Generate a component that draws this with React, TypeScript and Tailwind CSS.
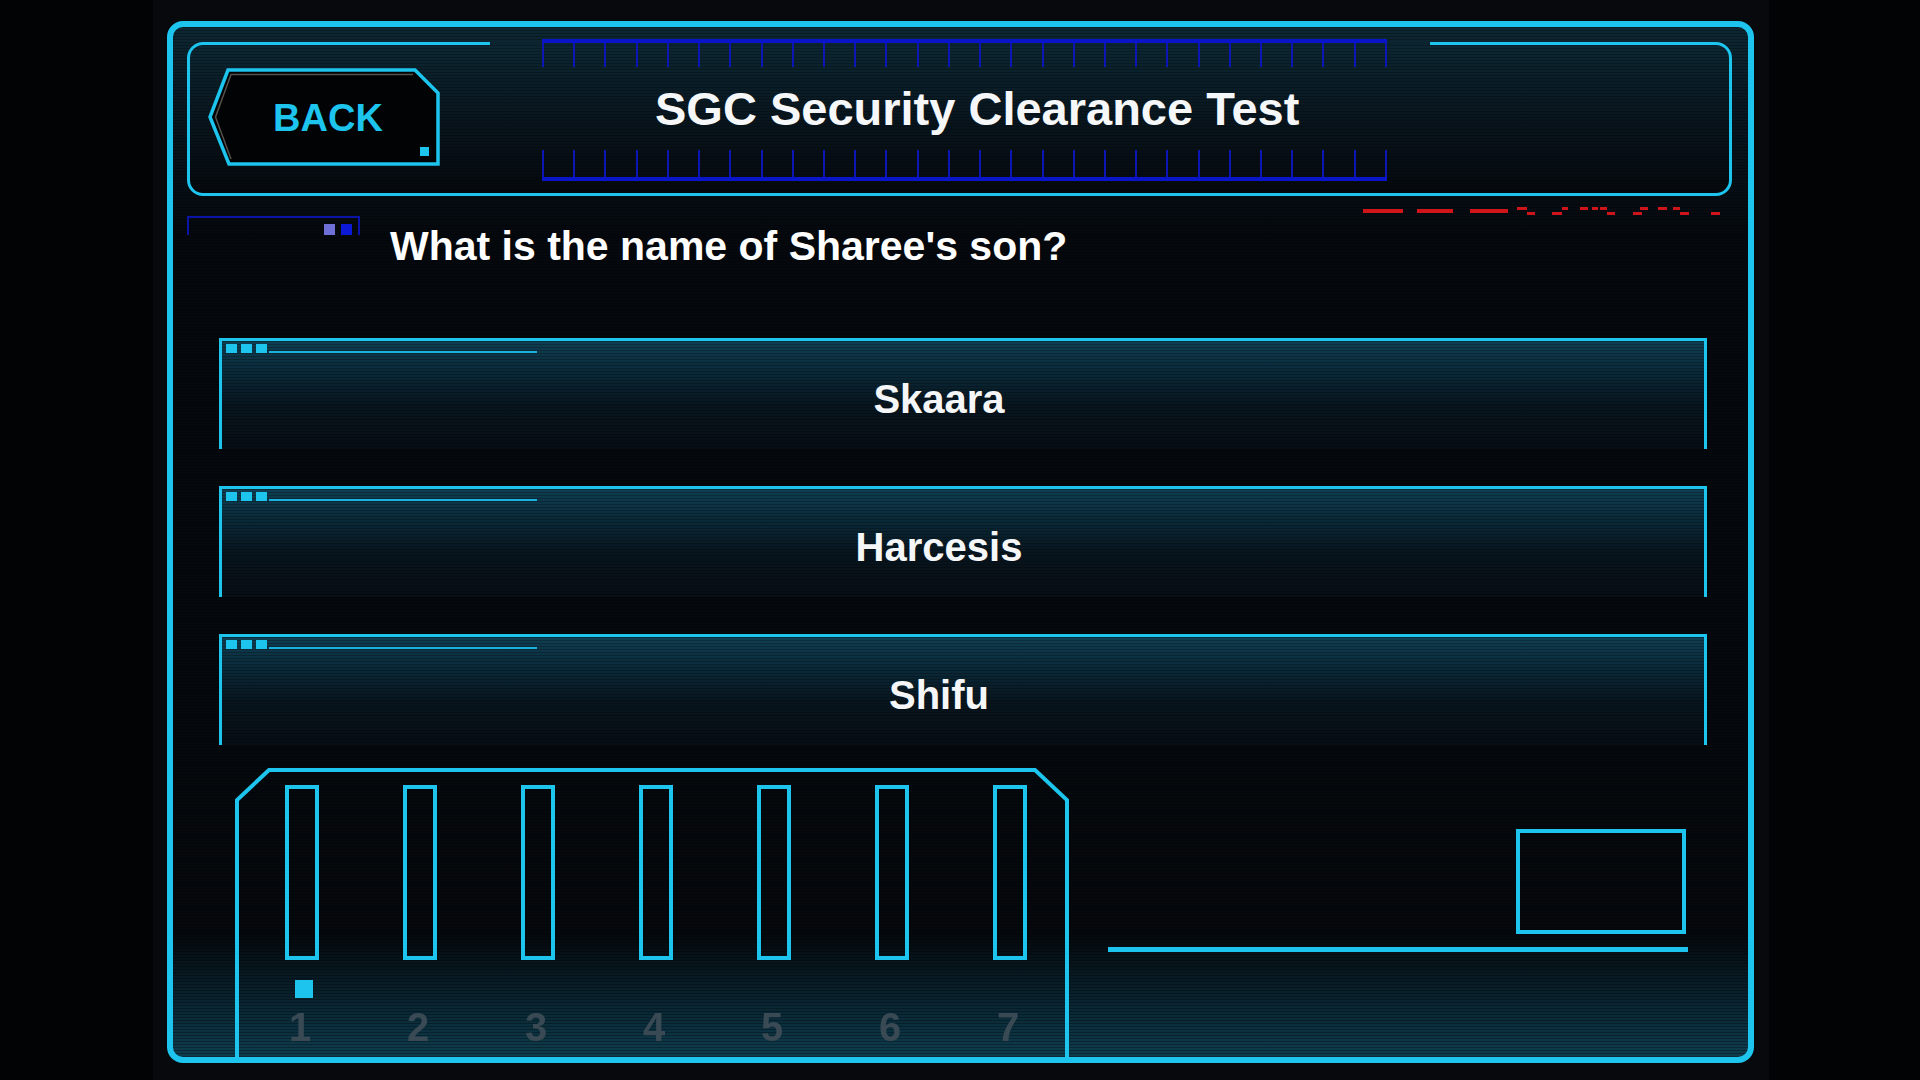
const dashes: [number, number, number, number][] = [
  [3, 4, 40, 4],
  [57, 4, 36, 4],
  [110, 4, 38, 4],
  [157, 2, 10, 3],
  [167, 7, 8, 3],
  [192, 7, 10, 3],
  [202, 2, 6, 3],
  [220, 2, 8, 3],
  [232, 2, 6, 3],
  [240, 2, 7, 3],
  [247, 7, 8, 3],
  [273, 7, 9, 3],
  [280, 2, 8, 3],
  [298, 2, 9, 3],
  [313, 2, 7, 3],
  [320, 7, 9, 3],
  [351, 7, 9, 3],
]

const answers = ['Skaara', 'Harcesis', 'Shifu']

function Ruler({ flip }: { flip?: boolean }) {
  return (
    <div
      className={
        flip
          ? 'flex h-full w-full items-end justify-between border-b-4 border-[#0a14c8]'
          : 'flex h-full w-full items-start justify-between border-t-4 border-[#0a14c8]'
      }
    >
      {Array.from({ length: 28 }).map((_, i) => (
        <div key={i} className="h-full w-[2px] bg-[#0b16b4]" />
      ))}
    </div>
  )
}

function BackButton() {
  return (
    <button className="relative mb-[4px] ml-[18px] flex h-[98px] w-[232px] shrink-0 items-center justify-center pl-[8px] pt-[2px]">
      <svg className="absolute inset-0" width="232" height="98" viewBox="0 0 232 98">
        <polygon
          points="20,2 207,2 230,25 230,96 21,96 2,49"
          fill="#020305"
          stroke="#1cc4ee"
          strokeWidth="3.5"
        />
        <polyline points="205,6.5 23,6.5 7.5,49 23,91" fill="none" stroke="#55504b" strokeWidth="1.5" />
        <rect x="212" y="79" width="9" height="9" fill="#1cc4ee" />
      </svg>
      <span className="relative text-[38px] font-bold leading-none text-[#1cc4ee]">BACK</span>
    </button>
  )
}

function Answer({ label }: { label: string }) {
  return (
    <div className="flex h-[111px] w-[1488px] flex-col border-x-[3px] border-t-[3px] border-[#1cc4ee] bg-[image:repeating-linear-gradient(to_bottom,rgba(0,0,0,0.25)_0px,rgba(0,0,0,0.25)_1px,transparent_1px,transparent_3px),linear-gradient(to_bottom,#0f3e52_0%,#0a2938_30%,#08151e_60%,#070e14_100%)]">
      <div className="ml-[4px] mt-[2px] flex h-[10px] items-end">
        <div className="flex gap-[4px]">
          <div className="h-[9px] w-[11px] bg-[#1cc4ee]" />
          <div className="h-[9px] w-[11px] bg-[#1cc4ee]" />
          <div className="h-[9px] w-[11px] bg-[#1cc4ee]" />
        </div>
        <div className="ml-[2px] h-[2px] w-[268px] bg-[#1ab2de]" />
      </div>
      <div className="flex flex-1 items-center justify-center pb-[4px] pr-[48px]">
        <span className="text-[40px] font-bold leading-none text-[#f4f6f8]">{label}</span>
      </div>
    </div>
  )
}

function Slot({ n }: { n: number }) {
  return (
    <div className="flex w-[118px] flex-col items-center">
      <div className="mt-[17px] h-[175px] w-[34px] border-[4px] border-[#1cc4ee]" />
      <div className={n === 1 ? 'ml-[3px] mt-[20px] h-[18px] w-[18px] bg-[#1cc4ee]' : 'mt-[20px] h-[18px] w-[18px]'} />
      <span className="mr-[4px] mt-[9px] text-[40px] font-bold leading-none text-[#3a4a55] blur-[0.7px]">{n}</span>
    </div>
  )
}

export default function App() {
  return (
    <div className="flex h-[1080px] w-[1920px] overflow-hidden bg-[#020304] font-['Liberation_Sans',Arial,sans-serif]">
      <div className="ml-[153px] h-[1080px] w-[1616px] bg-[#07090d] pl-[14px] pt-[21px]">
        <div className="flex h-[1042px] w-[1587px] flex-col overflow-hidden rounded-[16px] border-[6px] border-[#1cc4ee] bg-[image:repeating-linear-gradient(to_bottom,rgba(0,0,0,0.3)_0px,rgba(0,0,0,0.3)_1px,transparent_1px,transparent_3px),linear-gradient(to_bottom,#0d2833_0%,#081822_7%,#05090e_20%,#05080c_88%,#0a2a38_96%,#0f3d4e_100%)] px-[14px] pt-[15px]">
          {/* header */}
          <div className="relative flex h-[154px] w-[1545px] shrink-0 items-center rounded-[16px] border-[3px] border-[#1cc4ee] bg-[image:repeating-linear-gradient(to_bottom,rgba(0,0,0,0.25)_0px,rgba(0,0,0,0.25)_1px,transparent_1px,transparent_3px),linear-gradient(to_bottom,#0c2733_0%,#08141c_55%,#05090d_100%)]">
            <div className="absolute left-[300px] top-[-3px] h-[3px] w-[940px] bg-[#0b2430]" />
            <div className="absolute left-[352px] top-[-6px] h-[28px] w-[845px]">
              <Ruler />
            </div>
            <div className="absolute left-[352px] top-[105px] h-[31px] w-[845px]">
              <Ruler flip />
            </div>
            <BackButton />
            <h1 className="relative mb-[22px] ml-[215px] text-[47px] font-bold leading-none text-[#f5f7f9]">
              SGC Security Clearance Test
            </h1>
          </div>

          {/* question */}
          <div className="mt-[9px] flex h-[60px] w-[1545px] shrink-0 items-start">
            <div className="mt-[11px] flex h-[19px] w-[173px] shrink-0 items-end justify-end gap-[6px] border-x-2 border-t-2 border-[#0c14a8] pr-[6px]">
              <div className="h-[11px] w-[11px] bg-[#6f6fd8]" />
              <div className="h-[11px] w-[11px] bg-[#0c1ad8]" />
            </div>
            <p className="ml-[30px] mt-[21px] text-[41px] font-bold leading-none text-white">
              What is the name of Sharee's son?
            </p>
            <svg className="ml-auto mr-[7px]" width="365" height="12" viewBox="0 0 365 12">
              {dashes.map(([x, y, w, h], i) => (
                <rect key={i} x={x} y={y} width={w} height={h} fill="#d0151a" />
              ))}
            </svg>
          </div>

          {/* answers */}
          <div className="ml-[32px] mt-[73px] flex shrink-0 flex-col gap-[37px]">
            {answers.map((a) => (
              <Answer key={a} label={a} />
            ))}
          </div>

          {/* bottom */}
          <div className="mt-[23px] flex flex-1 items-start">
            <div className="relative ml-[48px] h-[289px] w-[834px] shrink-0 pl-[8px]">
              <svg className="absolute inset-0" width="834" height="289" viewBox="0 0 834 289">
                <path d="M2 292 L2 32 L34 2 L800 2 L832 32 L832 292" fill="none" stroke="#1cc4ee" strokeWidth="4" />
              </svg>
              <div className="relative flex">
                {[1, 2, 3, 4, 5, 6, 7].map((n) => (
                  <Slot key={n} n={n} />
                ))}
              </div>
            </div>
            <div className="ml-[39px] flex w-[580px] flex-col items-end">
              <div className="mr-[2px] mt-[61px] h-[105px] w-[170px] border-[4px] border-[#1cc4ee]" />
              <div className="mt-[13px] h-[5px] w-[580px] bg-[#1cc4ee]" />
            </div>
          </div>
        </div>
      </div>
    </div>
  )
}
